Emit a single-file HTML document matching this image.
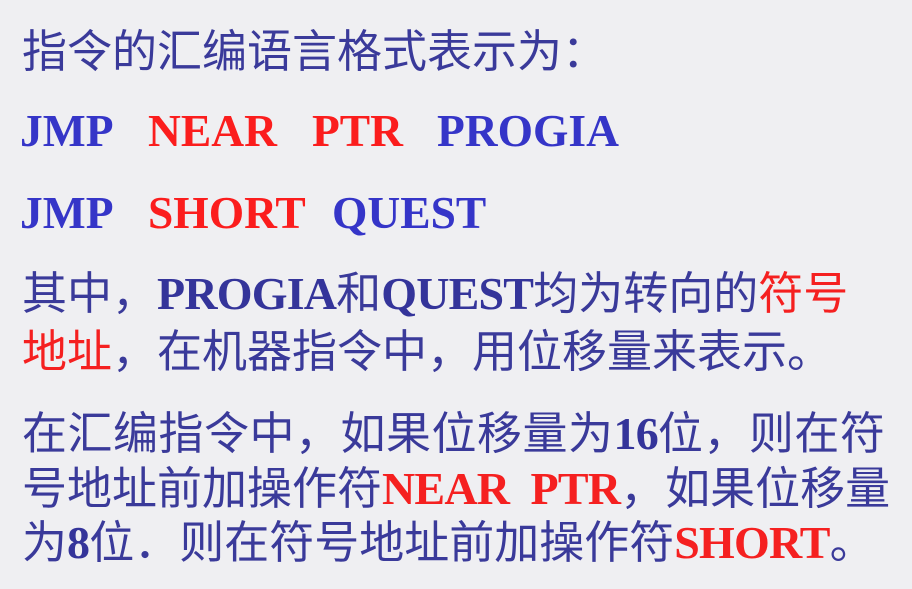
<!DOCTYPE html>
<html><head><meta charset="utf-8"><style>
html,body{margin:0;padding:0;}
body{width:912px;height:589px;background:#efeff2;position:relative;overflow:hidden;
font-family:"Liberation Sans","Noto Sans CJK SC",sans-serif;color:#3a3a9a;}
.l{position:absolute;left:22px;font-size:45px;line-height:56px;white-space:nowrap;}
.b{font-family:"Liberation Serif",serif;font-weight:bold;font-size:46px;letter-spacing:-0.8px;color:#34349a;}
.r{color:#f52020;}
.w{position:absolute;font-family:"Liberation Serif",serif;font-weight:bold;font-size:45.5px;line-height:56px;color:#3535c8;white-space:nowrap;}
.w.r{color:#fb1d1d;}
</style></head><body>
<div class="l" style="top:24px">指令的汇编语言格式表示为：</div>
<div class="w" style="left:20px;top:103px">JMP</div>
<div class="w r" style="left:148px;top:103px">NEAR</div>
<div class="w r" style="left:312px;top:103px">PTR</div>
<div class="w" style="left:437px;top:103px">PROGIA</div>
<div class="w" style="left:20px;top:185px">JMP</div>
<div class="w r" style="left:148px;top:185px">SHORT</div>
<div class="w" style="left:332px;top:185px">QUEST</div>
<div class="l" style="top:266px">其中，<span class="b">PROGIA</span>和<span class="b">QUEST</span>均为转向的<span class="r">符号</span></div>
<div class="l" style="top:324px"><span class="r">地址</span>，在机器指令中，用位移量来表示。</div>
<div class="l" style="top:406px;letter-spacing:0.5px">在汇编指令中，如果位移量为<span class="b">16</span>位，则在符</div>
<div class="l" style="top:461px">号地址前加操作符<span class="b r">NEAR&nbsp;&nbsp;PTR</span>，如果位移量</div>
<div class="l" style="top:515px">为<span class="b">8</span>位．则在符号地址前加操作符<span class="b r">SHORT</span>。</div>
</body></html>
